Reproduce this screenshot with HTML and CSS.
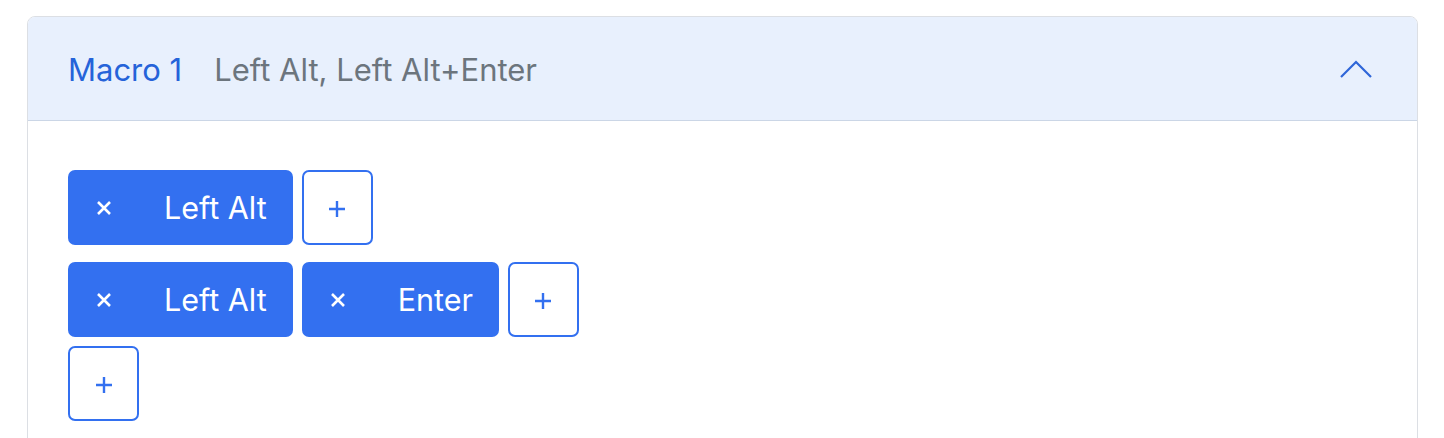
FILE: index.html
```html
<!DOCTYPE html>
<html lang="en">
<head>
<meta charset="utf-8">
<title>Macro</title>
<link rel="stylesheet" href="styles.css">
</head>
<body>
<div class="page">
  <div class="card">
    <div class="card-header">
      <div class="title">
        <span class="macro-name">Macro 1</span>
        <span class="macro-summary">Left Alt, Left Alt+Enter</span>
      </div>
      <svg class="chevron" width="34" height="20" viewBox="0 0 34 20"><path d="M2 17 L17 2 L32 17" fill="none" stroke="#2f66d8" stroke-width="2.2"/></svg>
    </div>
    <div class="card-body">
      <div class="row row-1">
        <div class="chip"><svg class="x" width="16" height="16" viewBox="0 0 16 16"><path d="M2 2 L14 14 M14 2 L2 14" stroke="#fff" stroke-width="2.6"/></svg><span>Left Alt</span></div>
        <div class="add"><svg width="18" height="18" viewBox="0 0 18 18"><path d="M9 1 V17 M1 9 H17" stroke="#3370f0" stroke-width="2.4"/></svg></div>
      </div>
      <div class="row row-2">
        <div class="chip"><svg class="x" width="16" height="16" viewBox="0 0 16 16"><path d="M2 2 L14 14 M14 2 L2 14" stroke="#fff" stroke-width="2.6"/></svg><span>Left Alt</span></div>
        <div class="chip"><svg class="x" width="16" height="16" viewBox="0 0 16 16"><path d="M2 2 L14 14 M14 2 L2 14" stroke="#fff" stroke-width="2.6"/></svg><span>Enter</span></div>
        <div class="add"><svg width="18" height="18" viewBox="0 0 18 18"><path d="M9 1 V17 M1 9 H17" stroke="#3370f0" stroke-width="2.4"/></svg></div>
      </div>
      <div class="row row-3">
        <div class="add"><svg width="18" height="18" viewBox="0 0 18 18"><path d="M9 1 V17 M1 9 H17" stroke="#3370f0" stroke-width="2.4"/></svg></div>
      </div>
    </div>
  </div>
</div>
</body>
</html>
```
FILE: styles.css
```css
html, body {
  margin: 0;
  padding: 0;
  background: #ffffff;
  font-family: Inter, "Noto Sans", sans-serif;
}
.page {
  padding: 16px 26px 0 27px;
}
.card {
  border: 1px solid #dcdfe4;
  border-radius: 8px;
  height: 500px;
  overflow: hidden;
}
.card-header {
  height: 104px;
  box-sizing: border-box;
  background: #e8f0fd;
  border-bottom: 1px solid #cbd6e6;
  display: flex;
  align-items: center;
  justify-content: space-between;
  padding: 2px 44px 0 40px;
}
.title {
  display: flex;
  align-items: baseline;
  gap: 32px;
  font-size: 31px;
}
.macro-name {
  color: #2563d9;
}
.macro-summary {
  color: #6c757d;
}
.chevron {
  display: block;
}
.card-body {
  padding: 49px 40px 0 40px;
}
.row {
  display: flex;
  gap: 9px;
}
.row-1 {
  margin-bottom: 17px;
}
.row-2 {
  margin-bottom: 9px;
}
.chip {
  height: 75px;
  box-sizing: border-box;
  background: #3370f0;
  border-radius: 7px;
  color: #ffffff;
  display: flex;
  align-items: center;
  gap: 52px;
  padding: 0 26px 0 28px;
  font-size: 30.5px;
}
.chip .x {
  display: block;
  flex: none;
}
.add {
  width: 71px;
  height: 75px;
  box-sizing: border-box;
  border: 2px solid #3370f0;
  border-radius: 7px;
  display: flex;
  align-items: center;
  justify-content: center;
  background: #fff;
}
.add svg {
  display: block;
  margin-top: 3px;
}
```
